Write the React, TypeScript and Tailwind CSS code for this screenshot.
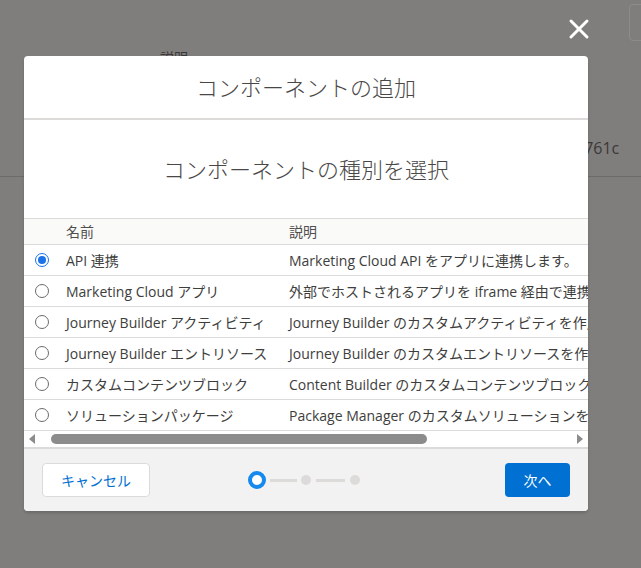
import React from "react";

const rows = [
  { name: "API 連携", desc: "Marketing Cloud API をアプリに連携します。" },
  { name: "Marketing Cloud アプリ", desc: "外部でホストされるアプリを iframe 経由で連携します。" },
  { name: "Journey Builder アクティビティ", desc: "Journey Builder のカスタムアクティビティを作成します。" },
  { name: "Journey Builder エントリソース", desc: "Journey Builder のカスタムエントリソースを作成します。" },
  { name: "カスタムコンテンツブロック", desc: "Content Builder のカスタムコンテンツブロックを作成します。" },
  { name: "ソリューションパッケージ", desc: "Package Manager のカスタムソリューションを作成します。" },
];

const font = { fontFamily: '"Open Sans", "Noto Sans CJK JP", sans-serif' };

const Radio = ({ checked }: { checked: boolean }) =>
  checked ? (
    <span className="w-[14px] h-[14px] rounded-full border-[1.5px] border-[#1a73e8] bg-white flex items-center justify-center">
      <span className="w-[8px] h-[8px] rounded-full bg-[#1a73e8]" />
    </span>
  ) : (
    <span className="w-[14px] h-[14px] rounded-full border border-[#6b6b6b] bg-white" />
  );

export default function App() {
  return (
    <div className="relative w-[641px] h-[568px] overflow-hidden bg-[#807e7c]" style={font}>
      {/* dimmed page behind the overlay */}
      <span className="absolute left-[160px] top-[51px] text-[14px] leading-[14px] text-[#3a3838]">説明</span>
      <span className="absolute left-[575px] top-[136px] text-[16px] text-[#3a3838]">1761c</span>
      <div className="absolute left-0 right-0 top-[176px] h-px bg-[#6d6b6a]" />
      <div className="absolute left-[629px] top-[4px] w-[30px] h-[37px] rounded border border-[#8e8c8b]" />

      {/* close */}
      <button className="absolute left-[568px] top-[18px] w-[22px] h-[22px]">
        <svg viewBox="0 0 22 22" className="w-[22px] h-[22px]" stroke="white" strokeWidth="3" strokeLinecap="round">
          <path d="M3 3 19 19" />
          <path d="M19 3 3 19" />
        </svg>
      </button>

      {/* modal */}
      <div className="absolute left-[24px] top-[56px] w-[564px] rounded bg-white shadow-[0_2px_3px_rgba(0,0,0,0.16)] overflow-hidden flex flex-col">
        <div className="h-[64px] flex items-center justify-center border-b-2 border-[#dddbda]">
          <h2 className="text-[22px] text-[#4a4847] font-light">コンポーネントの追加</h2>
        </div>

        <div className="h-[98px] flex items-center justify-center">
          <h3 className="text-[22px] text-[#4a4847] font-light">コンポーネントの種別を選択</h3>
        </div>

        <div className="overflow-hidden text-[14px] text-[#3e3e3c] whitespace-nowrap">
          <div className="h-[27px] flex items-center bg-[#fafaf9] border-y border-[#dddbda] text-[#514f4d]">
            <div className="w-[34px] shrink-0" />
            <div className="w-[223px] shrink-0 pl-[8px]">名前</div>
            <div className="pl-[8px]">説明</div>
          </div>
          {rows.map((r, i) => (
            <div key={r.name} className="h-[31px] flex items-center border-b border-[#dddbda]">
              <div className="w-[34px] shrink-0 flex justify-center pl-[1px]">
                <Radio checked={i === 0} />
              </div>
              <div className="w-[223px] shrink-0 pl-[8px]">{r.name}</div>
              <div className="pl-[8px]">{r.desc}</div>
            </div>
          ))}
        </div>

        {/* horizontal scrollbar */}
        <div className="h-[16px] flex items-center px-[5px] gap-[16px]">
          <svg viewBox="0 0 6 10" className="w-[6px] h-[10px] shrink-0" fill="#8c8c8c">
            <path d="M6 0 0 5 6 10Z" />
          </svg>
          <div className="flex-1 flex items-center">
            <div className="w-[376px] h-[10px] rounded-full bg-[#8c8c8c]" />
          </div>
          <svg viewBox="0 0 6 10" className="w-[6px] h-[10px] shrink-0" fill="#8c8c8c">
            <path d="M0 0 6 5 0 10Z" />
          </svg>
        </div>

        <div className="h-[64px] bg-[#f3f2f2] border-t-2 border-[#dddbda] flex items-center px-[18px]">
          <button className="w-[108px] h-[34px] rounded bg-white border border-[#dddbda] text-[14px] text-[#0070d2]">
            キャンセル
          </button>
          <div className="flex items-center ml-[98px]">
            <span className="w-[18px] h-[18px] rounded-full border-4 border-[#1589ee] bg-white" />
            <span className="ml-[4px] w-[27px] h-[3px] bg-[#dddbda]" />
            <span className="ml-[4px] w-[10px] h-[10px] rounded-full bg-[#dddbda]" />
            <span className="ml-[5px] w-[29px] h-[3px] bg-[#dddbda]" />
            <span className="ml-[5px] w-[10px] h-[10px] rounded-full bg-[#dddbda]" />
          </div>
          <button className="ml-auto w-[65px] h-[34px] rounded bg-[#0070d2] text-[14px] text-white">次へ</button>
        </div>
      </div>
    </div>
  );
}
